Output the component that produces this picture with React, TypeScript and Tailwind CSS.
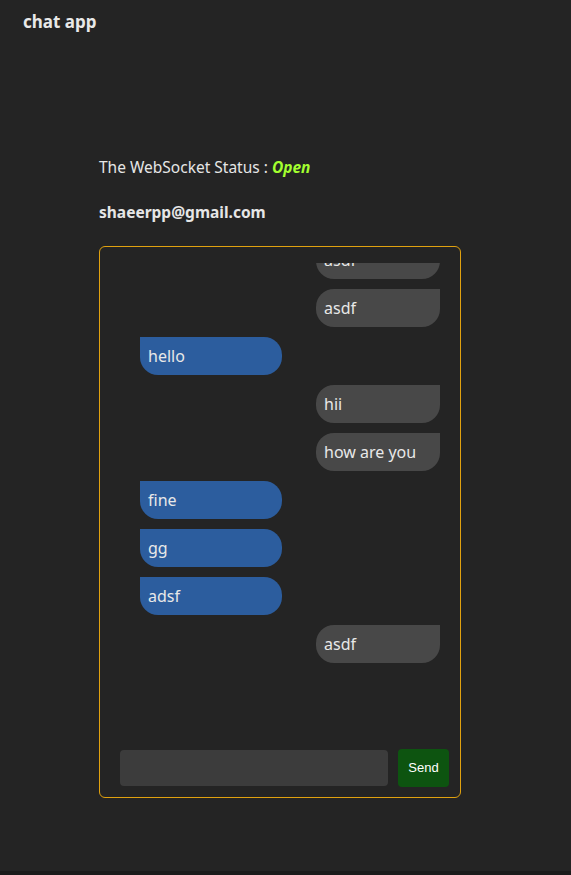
const messages = [
  { text: "asdf", mine: false },
  { text: "asdf", mine: false },
  { text: "hello", mine: true },
  { text: "hii", mine: false },
  { text: "how are you", mine: false },
  { text: "fine", mine: true },
  { text: "gg", mine: true },
  { text: "adsf", mine: true },
  { text: "asdf", mine: false },
];

export default function App() {
  return (
    <div className="min-h-screen bg-[#1b1b1b]" style={{ fontFamily: '"Noto Sans", "Open Sans", sans-serif' }}>
      <div className="h-[871px] bg-[#242424] text-[#e6e6e6]">
        {/* Header */}
        <div className="px-[23px] pt-[10px]">
          <h1 className="text-[17px] font-bold leading-6 text-[#e8e8e8]">chat app</h1>
        </div>

        <div className="ml-[99px] mt-[121px] w-[362px]">
          <p className="text-[15.5px] leading-6">
            The WebSocket Status : <span className="font-bold italic text-[#a3ff2f]">Open</span>
          </p>
          <p className="mt-[21px] text-[15.5px] font-bold leading-6">shaeerpp@gmail.com</p>

          {/* Chat box */}
          <div className="mt-[22px] rounded-md border border-[#e0a10f] pt-4 pb-[10px]">
            <div className="flex h-[400px] flex-col justify-end gap-[10px] overflow-hidden pl-10 pr-5">
              {messages.map((m, i) => (
                <div key={i} className={m.mine ? "flex shrink-0 justify-start" : "flex shrink-0 justify-end"}>
                  <div
                    className={
                      m.mine
                        ? "flex h-[38px] w-[142px] items-center rounded-[18px] rounded-tl-none bg-[#2c5d9e] px-2 text-[16px] text-[#e8e8e8]"
                        : "flex h-[38px] w-[124px] items-center rounded-[18px] rounded-tr-none bg-[#484848] px-2 text-[16px] text-[#e8e8e8]"
                    }
                  >
                    {m.text}
                  </div>
                </div>
              ))}
            </div>

            <div className="mt-[86px] flex items-center gap-[10px] pl-5 pr-[11px]">
              <input className="h-9 w-[268px] rounded bg-[#3c3c3c] px-2 text-[#e8e8e8] outline-none" />
              <button
                className="h-[38px] w-[51px] rounded bg-[#0d5410] text-[13px] text-white"
                style={{ fontFamily: '"Liberation Sans", Arial, sans-serif' }}
              >
                Send
              </button>
            </div>
          </div>
        </div>
      </div>
    </div>
  );
}
